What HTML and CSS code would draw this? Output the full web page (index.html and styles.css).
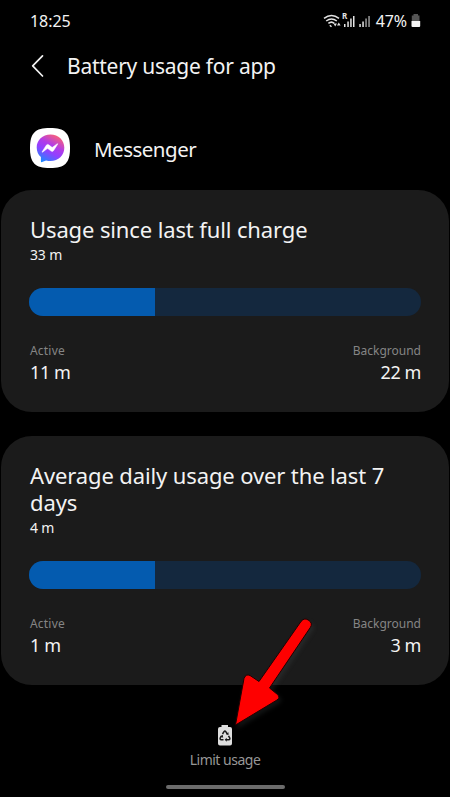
FILE: index.html
```html
<!DOCTYPE html>
<html lang="en">
<head>
<meta charset="utf-8">
<title>Battery usage for app</title>
<link rel="stylesheet" href="styles.css">
</head>
<body>
<div class="screen">
  <div class="status">
    <span class="clock">18:25</span>
    <svg class="signals" width="50" height="18" viewBox="0 0 50 18">
      <g fill="none" stroke="#e4e4e4" stroke-width="1.5">
        <path d="M1 6.4Q8.500 .8 16 6.400M3.200 9Q8.500 4.800 13.800 9M5.400 11.400Q8.500 8.800 11.200 11.400"/>
        <path d="M6.800 13.200L8.500 14.800"/>
      </g>
      <path d="M10.500 11.500l1.700 3 1.700-3zM14 13.500l1.800-3 1.800 3z" fill="#e4e4e4"/>
      <text class="roam" x="19" y="7">R</text>
      <path d="M21 12h1.500v3H21zM24.300 9.500h1.500V15h-1.500zM27.200 6.500h1.500V15h-1.500zM30 4h1.500v11h-1.500zM36.300 12h1.500v3h-1.500zM39.300 9.500h1.500V15h-1.500z" fill="#e4e4e4"/>
      <path d="M42.300 6.500h1.500V15h-1.500zM45.300 4h1.500v11h-1.500z" fill="#999"/>
    </svg>
    <span class="percent">47%</span>
    <svg class="cell" width="10" height="14" viewBox="0 0 10 14">
      <path d="M2.500 0h4.500v1.500H8.500V7H.8V1.500h1.700z" fill="#555"/>
      <path d="M.5 7h8.700v5q0 1-1 1H1.500q-1 0-1-1z" fill="#f5f5f5"/>
    </svg>
  </div>

  <div class="header">
    <svg class="back" width="14" height="24" viewBox="0 0 14 24"><path d="M11.500 1.800L1.700 11.800L11.500 22" fill="none" stroke="#f2f2f2" stroke-width="1.700" stroke-linecap="round" stroke-linejoin="round"/></svg>
    <span class="heading">Battery usage for app</span>
  </div>

  <div class="app">
    <svg width="40" height="40" viewBox="0 0 40 40">
      <defs>
        <linearGradient id="bubble" x1="0.200" y1="1" x2="0.750" y2="0">
          <stop offset="0" stop-color="#168cff"/>
          <stop offset=".4" stop-color="#9340ff"/>
          <stop offset=".62" stop-color="#b13ce8"/>
          <stop offset="1" stop-color="#ff6470"/>
        </linearGradient>
      </defs>
      <path d="M20 0C35 0 40 5 40 20S35 40 20 40 0 35 0 20 5 0 20 0z" fill="#fff"/>
      <path d="M20.500 6.500C12.500 6.500 6.700 12.300 6.700 19.500c0 4 1.600 7.200 4.200 9.600v4.200q0 1.200 1.200.8l4-1.700c1.400.4 2.800.6 4.400.6 8 0 13.800-5.800 13.800-13.200S28.500 6.500 20.500 6.500z" fill="url(#bubble)"/>
      <path d="M12.300 23.500l4-6.300q1-1.400 2.400-.4l3 2.300q.5.400 1.100 0l4.200-3.200q1.200-.7.500.5l-4 6.300q-1 1.400-2.400.4l-3-2.300q-.5-.4-1.100 0l-4.200 3.200q-1.200.7-.5-.5z" fill="#fff" stroke="#fff" stroke-width=".5"/>
    </svg>
    <span class="app-name">Messenger</span>
  </div>

  <section class="card">
    <h2 class="title">Usage since last full charge</h2>
    <div class="total">33 m</div>
    <div class="bar"><div class="fill"></div></div>
    <div class="stats">
      <div><div class="label active">Active</div><div class="value">11 m</div></div>
      <div class="right"><div class="label">Background</div><div class="value">22 m</div></div>
    </div>
  </section>

  <section class="card">
    <h2 class="title">Average daily usage over the last 7<br>days</h2>
    <div class="total">4 m</div>
    <div class="bar"><div class="fill"></div></div>
    <div class="stats">
      <div><div class="label active">Active</div><div class="value">1 m</div></div>
      <div class="right"><div class="label">Background</div><div class="value">3 m</div></div>
    </div>
  </section>

  <div class="footer">
    <svg width="16" height="22" viewBox="0 0 16 22">
      <path d="M4.500 0h6.500v2H13q2 0 2 2v14.500q0 2-2 2H3q-2 0-2-2V4q0-2 2-2h1.500z" fill="#dedede"/>
      <g fill="none" stroke="#191919" stroke-width="1.500">
        <path d="M5.500 9l1.500-2.300q.9-1.200 1.800 0L10.300 9M11.500 10.800l1.200 2q.7 1.600-1 1.900H9M6.500 14.700H4.300q-1.700-.3-1-1.900l1.200-2"/>
      </g>
      <path d="M11.500 7.200v3l-2.700-1.200zM9.700 12.700v4l-2-2zM3 11.500l2.700-1.700.5 3z" fill="#191919"/>
    </svg>
    <span class="limit">Limit usage</span>
  </div>
  <div class="handle"></div>

  <svg class="arrow" width="100" height="120" viewBox="225 610 100 120">
    <path d="M301 621.500Q304.500 617 309 620.500Q313 623.500 310.300 627.500L269.500 688L277.500 694.500Q280.500 697.500 277 700L235.500 725L244 678.500Q246 673.500 250 675.500L259 681.500Z" fill="#fe0000" stroke="#210000" stroke-width="1" stroke-linejoin="round"/>
  </svg>
</div>
</body>
</html>
```
FILE: styles.css
```css
* { box-sizing: border-box; }
body {
  margin: 0;
  background: #000;
  color: #f3f3f3;
  font-family: "Noto Sans", sans-serif;
}
.screen {
  position: relative;
  display: flex;
  flex-direction: column;
  width: 450px;
  height: 797px;
  overflow: hidden;
}
.screen span { white-space: nowrap; }
.status {
  display: flex;
  align-items: center;
  height: 42px;
  padding: 0 29px 0 30px;
  font-size: 16px;
}
.clock { letter-spacing: -0.05px; }
.signals { margin-left: auto; overflow: visible; }
.roam { font: bold 8px "Noto Sans", sans-serif; fill: #e4e4e4; }
.percent { margin-left: 3px; letter-spacing: -0.1px; }
.cell { margin: -1px 0 0 4px; }
.header {
  display: flex;
  align-items: center;
  height: 48px;
  padding-left: 31px;
}
.heading { margin-left: 22px; font-size: 21px; letter-spacing: -0.25px; }
.app {
  display: flex;
  align-items: center;
  height: 60px;
  margin-top: 28px;
  padding-left: 30px;
}
.app-name { margin: 1px 0 0 24px; font-size: 20.5px; letter-spacing: -0.5px; }
.card {
  flex: none;
  margin: 0 1px 24px;
  padding: 26px 28px 0;
  height: 222px;
  border-radius: 31px;
  background: #1b1b1b;
}
.app + .card { margin-top: 12px; }
.card + .card { height: 249px; margin-bottom: 0; }
.title {
  margin: 0 0 0 1px;
  font-size: 22px;
  font-weight: 400;
  line-height: 27px;
  letter-spacing: -0.12px;
  white-space: nowrap;
}
.total { margin-left: 1px; font-size: 14px; line-height: 24px; letter-spacing: -0.15px; }
.bar {
  height: 28px;
  margin-top: 21px;
  overflow: hidden;
  border-radius: 14px;
  background: #14283e;
}
.fill { width: 126px; height: 100%; background: #045baf; }
.stats {
  display: flex;
  justify-content: space-between;
  padding: 25px 0 0 1px;
}
.right { text-align: right; }
.label { color: #858585; font-size: 12px; line-height: 20px; }
.active { letter-spacing: 0.2px; }
.value { font-size: 18px; line-height: 22px; letter-spacing: -0.4px; }
.footer {
  display: flex;
  flex-direction: column;
  align-items: center;
  margin-top: 40px;
  color: #979797;
}
.limit { margin-top: 3px; font-size: 14px; line-height: 20px; letter-spacing: -0.5px; }
.handle {
  width: 119px;
  height: 4px;
  margin: 15px auto 0;
  border-radius: 2px;
  background: #6b6b6b;
}
.arrow {
  position: absolute;
  left: 225px;
  top: 610px;
  filter: drop-shadow(2px 3px 2px rgba(85, 95, 95, 0.2));
}
```
